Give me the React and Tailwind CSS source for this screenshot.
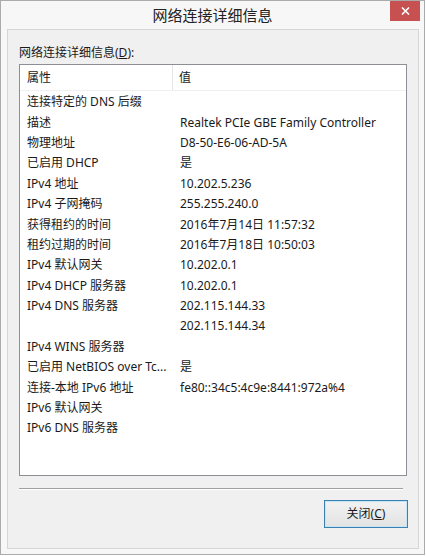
import React from "react";

const rows = [
  ["连接特定的 DNS 后缀", ""],
  ["描述", "Realtek PCIe GBE Family Controller"],
  ["物理地址", "D8-50-E6-06-AD-5A"],
  ["已启用 DHCP", "是"],
  ["IPv4 地址", "10.202.5.236"],
  ["IPv4 子网掩码", "255.255.240.0"],
  ["获得租约的时间", "2016年7月14日 11:57:32"],
  ["租约过期的时间", "2016年7月18日 10:50:03"],
  ["IPv4 默认网关", "10.202.0.1"],
  ["IPv4 DHCP 服务器", "10.202.0.1"],
  ["IPv4 DNS 服务器", "202.115.144.33"],
  ["", "202.115.144.34"],
  ["IPv4 WINS 服务器", ""],
  ["已启用 NetBIOS over Tc...", "是"],
  ["连接-本地 IPv6 地址", "fe80::34c5:4c9e:8441:972a%4"],
  ["IPv6 默认网关", ""],
  ["IPv6 DNS 服务器", ""],
];

const font = "font-['Noto_Sans','Noto_Sans_CJK_SC',sans-serif]";

export default function App() {
  return (
    <div className={`w-[426px] h-[556px] bg-white ${font} text-[12px] text-[#1a1a1a]`}>
      <div className="w-[425px] h-[555px] border border-[#ababab] bg-[#f7f7f7] flex flex-col">
        {/* title bar */}
        <div className="relative h-[28px] flex items-center justify-center">
          <span className="text-[15px] leading-[20px] text-[#222]">网络连接详细信息</span>
          <button className="absolute top-0 right-[4px] w-[30px] h-[20px] bg-[#c75050] flex items-center justify-center">
            <svg width="9" height="8" viewBox="0 0 9 8">
              <path d="M1 0.5 L8 7.5 M8 0.5 L1 7.5" stroke="#fff" strokeWidth="1.6" />
            </svg>
          </button>
        </div>

        {/* client area */}
        <div className="flex-1 ml-[6px] mr-[5px] mb-[5px] border border-[#d6d6d6] bg-[#f0f0f0] pl-[11px] pr-[10px] pt-[15px] flex flex-col">
          <div className="leading-[16px]">
            网络连接详细信息(<span className="underline">D</span>):
          </div>

          <div className="mt-[3px] w-[388px] h-[412px] border border-[#8e8f94] bg-white">
            <div className="flex h-[26px] items-center border-b border-[#f0f0f0]">
              <div className="w-[153px] h-full pl-[7px] flex items-center border-r border-[#e5e5e5]">属性</div>
              <div className="pl-[6px]">值</div>
            </div>
            <div className="pt-[1px]">
              {rows.map(([k, v], i) => (
                <div key={i} className="flex h-[20.4px] items-center">
                  <div className="w-[153px] pl-[7px] whitespace-nowrap">{k}</div>
                  <div className="pl-[7px] whitespace-nowrap">{v}</div>
                </div>
              ))}
            </div>
          </div>

          <div className="mt-[12px] w-[384px] h-[2px] border-t border-[#a0a0a0] border-b-white border-b"></div>

          <div className="flex justify-end mt-[10px]">
            <button className="w-[84px] h-[28px] border border-[#3c7fb1] bg-gradient-to-b from-[#f2f2f2] to-[#e3e3e3] shadow-[inset_0_0_0_1px_#c4e5f6] flex items-center justify-center text-[12px] text-[#1a1a1a]">
              关闭(<span className="underline">C</span>)
            </button>
          </div>
        </div>
      </div>
    </div>
  );
}
